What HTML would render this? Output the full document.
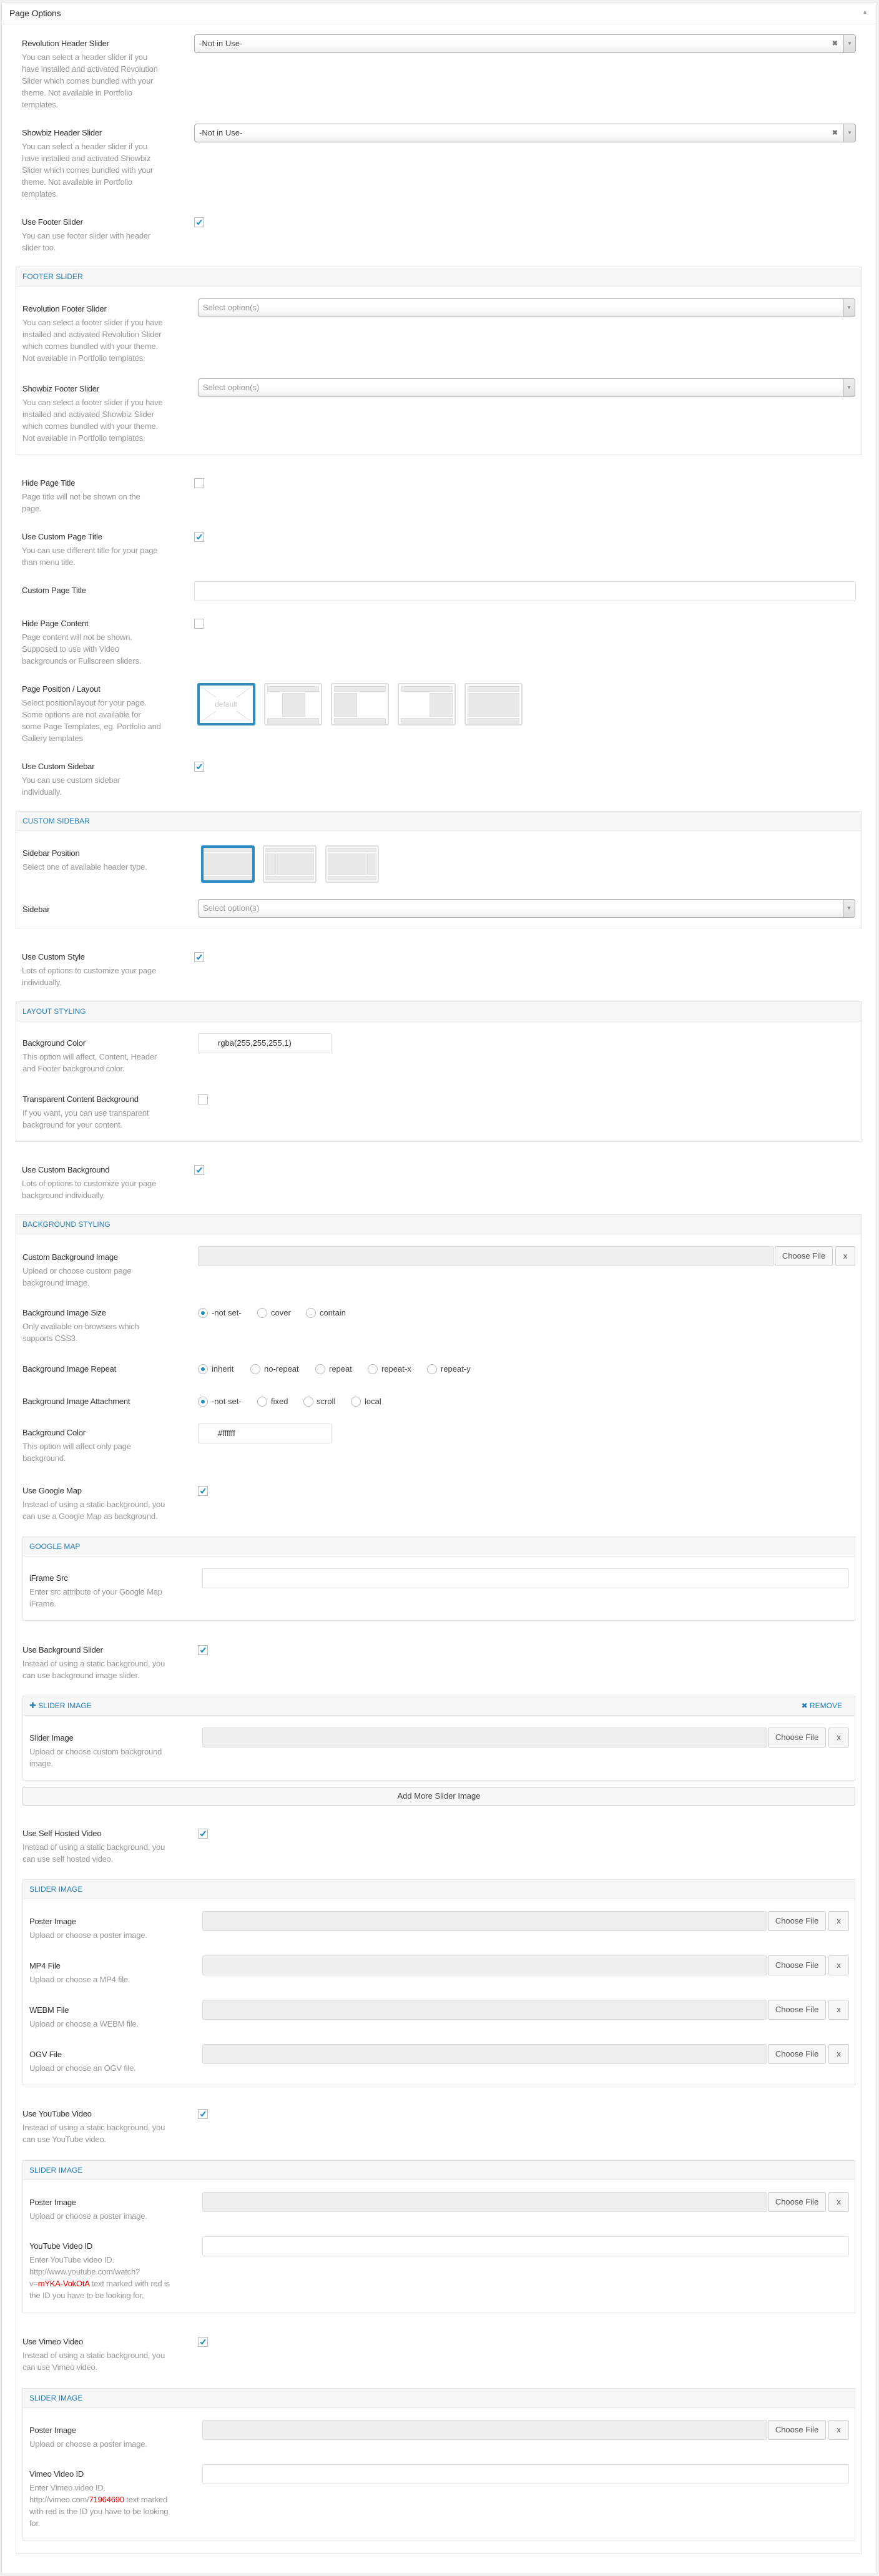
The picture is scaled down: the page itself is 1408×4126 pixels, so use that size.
<!DOCTYPE html>
<html><head><meta charset="utf-8"><style>
*{box-sizing:border-box;margin:0;padding:0}
body{width:1408px;height:4126px;background:#f1f1f1;position:relative;font-family:"Liberation Sans",sans-serif;overflow:hidden}
.a{position:absolute}
.outer{position:absolute;left:2px;top:3px;width:1403px;height:4120px;background:#fff;border:1px solid #e5e5e5}
.lb{position:absolute;font-size:13px;line-height:18px;color:#333;white-space:nowrap;letter-spacing:-0.2px}
.lb .d{display:block;color:#999;line-height:19px;margin-top:3px}
.box{position:absolute;border:1px solid #e5e5e5;background:#fff}
.box .h{height:31px;background:#f7f7f7;border-bottom:1px solid #e5e5e5;color:#2780b5;font-size:12px;line-height:30px;padding-left:10px;text-transform:uppercase}
.sel{position:absolute;height:30px;border:1px solid #aaa;border-radius:4px;background:linear-gradient(#fff 50%,#eee);font-size:13px;line-height:28px;color:#444;padding-left:7px}
.sel .ar{position:absolute;right:0;top:0;width:19px;height:28px;border-left:1px solid #aaa;background:linear-gradient(#eee,#ddd);border-radius:0 4px 4px 0;color:#888;font-size:8px;text-align:center;line-height:28px}
.sel .x{position:absolute;right:28px;top:0;color:#777;font-size:11px;font-weight:bold}
.sel.ph{color:#999}
.cb{position:absolute;width:16px;height:16px;border:1px solid #b4b9be;background:#fff}
.cb svg{position:absolute;left:1px;top:1px}
.inp{position:absolute;border:1px solid #ddd;border-radius:3px;background:#fff;height:32px;font-size:13px;line-height:30px;color:#333}
.fi{position:absolute;height:32px;background:#eee;border:1px solid #ddd;border-radius:3px}
.btn{position:absolute;height:32px;background:#f7f7f7;border:1px solid #ccc;border-radius:3px;font-size:13px;line-height:30px;text-align:center;color:#555}
.rd{position:absolute;width:16px;height:16px;border:1px solid #b4b9be;border-radius:50%;background:#fff}
.rd.on::after{content:"";position:absolute;left:4px;top:4px;width:6px;height:6px;border-radius:50%;background:#1e8cbe}
.rt{position:absolute;font-size:13px;line-height:18px;color:#444}
.img{position:absolute;border:2px solid #ddd;border-radius:3px;background:#fff}
.img.on{border:4px solid #2e8bbf}
.g{position:absolute;background:#e9e9e9;border:1px solid #ddd}
</style></head><body>
<div class="outer"></div>
<div class="a" style="left:3px;top:38px;width:1401px;height:1px;background:#eee"></div>
<div class="lb" style="left:15px;top:12px;font-size:14px;color:#222">Page Options</div>
<div class="a" style="left:1381px;top:14px;font-size:9px;color:#999">▲</div>

<!-- boxes -->
<div class="box" style="left:25px;top:427px;width:1356px;height:302px"><div class="h">Footer Slider</div></div>
<div class="box" style="left:25px;top:1299px;width:1356px;height:188px"><div class="h">Custom Sidebar</div></div>
<div class="box" style="left:25px;top:1604px;width:1356px;height:225px"><div class="h">Layout Styling</div></div>
<div class="box" style="left:25px;top:1945px;width:1356px;height:2146px"><div class="h">Background Styling</div></div>
<div class="box" style="left:36px;top:2461px;width:1334px;height:135px"><div class="h">Google Map</div></div>
<div class="box" style="left:36px;top:2716px;width:1334px;height:136px"><div class="h"><span style="font-size:13px">✚</span> Slider Image<span style="position:absolute;right:20px">✖ REMOVE</span></div></div>
<div class="btn" style="left:36px;top:2862px;width:1334px;height:30px;line-height:28px;color:#444">Add More Slider Image</div>
<div class="box" style="left:36px;top:3010px;width:1334px;height:330px"><div class="h">Slider Image</div></div>
<div class="box" style="left:36px;top:3460px;width:1334px;height:245px"><div class="h">Slider Image</div></div>
<div class="box" style="left:36px;top:3825px;width:1334px;height:244px"><div class="h">Slider Image</div></div>

<!-- labels -->
<div class="lb" style="left:35px;top:61px">Revolution Header Slider<span class="d">You can select a header slider if you<br>have installed and activated Revolution<br>Slider which comes bundled with your<br>theme. Not available in Portfolio<br>templates.</span></div>
<div class="lb" style="left:35px;top:204px">Showbiz Header Slider<span class="d">You can select a header slider if you<br>have installed and activated Showbiz<br>Slider which comes bundled with your<br>theme. Not available in Portfolio<br>templates.</span></div>
<div class="lb" style="left:35px;top:347px">Use Footer Slider<span class="d">You can use footer slider with header<br>slider too.</span></div>
<div class="lb" style="left:36px;top:486px">Revolution Footer Slider<span class="d">You can select a footer slider if you have<br>installed and activated Revolution Slider<br>which comes bundled with your theme.<br>Not available in Portfolio templates.</span></div>
<div class="lb" style="left:36px;top:614px">Showbiz Footer Slider<span class="d">You can select a footer slider if you have<br>installed and activated Showbiz Slider<br>which comes bundled with your theme.<br>Not available in Portfolio templates.</span></div>
<div class="lb" style="left:35px;top:765px">Hide Page Title<span class="d">Page title will not be shown on the<br>page.</span></div>
<div class="lb" style="left:35px;top:851px">Use Custom Page Title<span class="d">You can use different title for your page<br>than menu title.</span></div>
<div class="lb" style="left:35px;top:937px">Custom Page Title</div>
<div class="lb" style="left:35px;top:990px">Hide Page Content<span class="d">Page content will not be shown.<br>Supposed to use with Video<br>backgrounds or Fullscreen sliders.</span></div>
<div class="lb" style="left:35px;top:1095px">Page Position / Layout<span class="d">Select position/layout for your page.<br>Some options are not available for<br>some Page Templates, eg. Portfolio and<br>Gallery templates</span></div>
<div class="lb" style="left:35px;top:1219px">Use Custom Sidebar<span class="d">You can use custom sidebar<br>individually.</span></div>
<div class="lb" style="left:36px;top:1358px">Sidebar Position<span class="d">Select one of available header type.</span></div>
<div class="lb" style="left:36px;top:1448px">Sidebar</div>
<div class="lb" style="left:35px;top:1524px">Use Custom Style<span class="d">Lots of options to customize your page<br>individually.</span></div>
<div class="lb" style="left:36px;top:1662px">Background Color<span class="d">This option will affect, Content, Header<br>and Footer background color.</span></div>
<div class="lb" style="left:36px;top:1752px">Transparent Content Background<span class="d">If you want, you can use transparent<br>background for your content.</span></div>
<div class="lb" style="left:35px;top:1865px">Use Custom Background<span class="d">Lots of options to customize your page<br>background individually.</span></div>
<div class="lb" style="left:36px;top:2005px">Custom Background Image<span class="d">Upload or choose custom page<br>background image.</span></div>
<div class="lb" style="left:36px;top:2094px">Background Image Size<span class="d">Only available on browsers which<br>supports CSS3.</span></div>
<div class="lb" style="left:36px;top:2184px">Background Image Repeat</div>
<div class="lb" style="left:36px;top:2236px">Background Image Attachment</div>
<div class="lb" style="left:36px;top:2286px">Background Color<span class="d">This option will affect only page<br>background.</span></div>
<div class="lb" style="left:36px;top:2379px">Use Google Map<span class="d">Instead of using a static background, you<br>can use a Google Map as background.</span></div>
<div class="lb" style="left:47px;top:2519px">iFrame Src<span class="d">Enter src attribute of your Google Map<br>iFrame.</span></div>
<div class="lb" style="left:36px;top:2634px">Use Background Slider<span class="d">Instead of using a static background, you<br>can use background image slider.</span></div>
<div class="lb" style="left:47px;top:2775px">Slider Image<span class="d">Upload or choose custom background<br>image.</span></div>
<div class="lb" style="left:36px;top:2928px">Use Self Hosted Video<span class="d">Instead of using a static background, you<br>can use self hosted video.</span></div>
<div class="lb" style="left:47px;top:3069px">Poster Image<span class="d">Upload or choose a poster image.</span></div>
<div class="lb" style="left:47px;top:3140px">MP4 File<span class="d">Upload or choose a MP4 file.</span></div>
<div class="lb" style="left:47px;top:3211px">WEBM File<span class="d">Upload or choose a WEBM file.</span></div>
<div class="lb" style="left:47px;top:3282px">OGV File<span class="d">Upload or choose an OGV file.</span></div>
<div class="lb" style="left:36px;top:3377px">Use YouTube Video<span class="d">Instead of using a static background, you<br>can use YouTube video.</span></div>
<div class="lb" style="left:47px;top:3519px">Poster Image<span class="d">Upload or choose a poster image.</span></div>
<div class="lb" style="left:47px;top:3589px">YouTube Video ID<span class="d">Enter YouTube video ID.<br>http://www.youtube.com/watch?<br>v=<span style="color:#e00">mYKA-VokOtA</span> text marked with red is<br>the ID you have to be looking for.</span></div>
<div class="lb" style="left:36px;top:3742px">Use Vimeo Video<span class="d">Instead of using a static background, you<br>can use Vimeo video.</span></div>
<div class="lb" style="left:47px;top:3884px">Poster Image<span class="d">Upload or choose a poster image.</span></div>
<div class="lb" style="left:47px;top:3954px">Vimeo Video ID<span class="d">Enter Vimeo video ID.<br>http://vimeo.com/<span style="color:#e00">71964690</span> text marked<br>with red is the ID you have to be looking<br>for.</span></div>

<!-- selects -->
<div class="sel" style="left:311px;top:55px;width:1060px">-Not in Use-<span class="x">✖</span><span class="ar">▼</span></div>
<div class="sel" style="left:311px;top:198px;width:1060px">-Not in Use-<span class="x">✖</span><span class="ar">▼</span></div>
<div class="sel ph" style="left:317px;top:478px;width:1053px">Select option(s)<span class="ar">▼</span></div>
<div class="sel ph" style="left:317px;top:606px;width:1053px">Select option(s)<span class="ar">▼</span></div>
<div class="sel ph" style="left:317px;top:1440px;width:1053px">Select option(s)<span class="ar">▼</span></div>

<!-- checkboxes -->
<svg width="0" height="0" style="position:absolute"><defs><symbol id="ck" viewBox="0 0 14 14"><path d="M2.5 7.5 L5.5 10.5 L11.5 2.5" fill="none" stroke="#1e8cbe" stroke-width="2.4"/></symbol></defs></svg>
<div class="cb" style="left:311px;top:348px"><svg width="12" height="12"><use href="#ck"/></svg></div>
<div class="cb" style="left:311px;top:766px"></div>
<div class="cb" style="left:311px;top:852px"><svg width="12" height="12"><use href="#ck"/></svg></div>
<div class="cb" style="left:311px;top:991px"></div>
<div class="cb" style="left:311px;top:1220px"><svg width="12" height="12"><use href="#ck"/></svg></div>
<div class="cb" style="left:311px;top:1525px"><svg width="12" height="12"><use href="#ck"/></svg></div>
<div class="cb" style="left:317px;top:1753px"></div>
<div class="cb" style="left:311px;top:1866px"><svg width="12" height="12"><use href="#ck"/></svg></div>
<div class="cb" style="left:317px;top:2380px"><svg width="12" height="12"><use href="#ck"/></svg></div>
<div class="cb" style="left:317px;top:2635px"><svg width="12" height="12"><use href="#ck"/></svg></div>
<div class="cb" style="left:317px;top:2929px"><svg width="12" height="12"><use href="#ck"/></svg></div>
<div class="cb" style="left:317px;top:3378px"><svg width="12" height="12"><use href="#ck"/></svg></div>
<div class="cb" style="left:317px;top:3743px"><svg width="12" height="12"><use href="#ck"/></svg></div>

<!-- text inputs -->
<div class="inp" style="left:311px;top:931px;width:1060px"></div>
<div class="inp" style="left:317px;top:1655px;width:214px;padding-left:31px">rgba(255,255,255,1)</div>
<div class="inp" style="left:317px;top:2280px;width:214px;padding-left:31px">#ffffff</div>
<div class="inp" style="left:324px;top:2512px;width:1036px"></div>
<div class="inp" style="left:324px;top:3582px;width:1036px"></div>
<div class="inp" style="left:324px;top:3947px;width:1036px"></div>

<!-- file inputs -->
<div class="fi" style="left:317px;top:1996px;width:923px"></div><div class="btn" style="left:1241px;top:1996px;width:93px">Choose File</div><div class="btn" style="left:1338px;top:1996px;width:32px">x</div>
<div class="fi" style="left:324px;top:2767px;width:905px"></div><div class="btn" style="left:1230px;top:2767px;width:93px">Choose File</div><div class="btn" style="left:1327px;top:2767px;width:33px">x</div>
<div class="fi" style="left:324px;top:3061px;width:905px"></div><div class="btn" style="left:1230px;top:3061px;width:93px">Choose File</div><div class="btn" style="left:1327px;top:3061px;width:33px">x</div>
<div class="fi" style="left:324px;top:3132px;width:905px"></div><div class="btn" style="left:1230px;top:3132px;width:93px">Choose File</div><div class="btn" style="left:1327px;top:3132px;width:33px">x</div>
<div class="fi" style="left:324px;top:3203px;width:905px"></div><div class="btn" style="left:1230px;top:3203px;width:93px">Choose File</div><div class="btn" style="left:1327px;top:3203px;width:33px">x</div>
<div class="fi" style="left:324px;top:3274px;width:905px"></div><div class="btn" style="left:1230px;top:3274px;width:93px">Choose File</div><div class="btn" style="left:1327px;top:3274px;width:33px">x</div>
<div class="fi" style="left:324px;top:3511px;width:905px"></div><div class="btn" style="left:1230px;top:3511px;width:93px">Choose File</div><div class="btn" style="left:1327px;top:3511px;width:33px">x</div>
<div class="fi" style="left:324px;top:3876px;width:905px"></div><div class="btn" style="left:1230px;top:3876px;width:93px">Choose File</div><div class="btn" style="left:1327px;top:3876px;width:33px">x</div>

<!-- radios -->
<div class="rd on" style="left:317px;top:2095px"></div><div class="rt" style="left:339px;top:2094px">-not set-</div>
<div class="rd" style="left:412px;top:2095px"></div><div class="rt" style="left:434px;top:2094px">cover</div>
<div class="rd" style="left:490px;top:2095px"></div><div class="rt" style="left:512px;top:2094px">contain</div>
<div class="rd on" style="left:317px;top:2185px"></div><div class="rt" style="left:339px;top:2184px">inherit</div>
<div class="rd" style="left:401px;top:2185px"></div><div class="rt" style="left:423px;top:2184px">no-repeat</div>
<div class="rd" style="left:505px;top:2185px"></div><div class="rt" style="left:527px;top:2184px">repeat</div>
<div class="rd" style="left:589px;top:2185px"></div><div class="rt" style="left:611px;top:2184px">repeat-x</div>
<div class="rd" style="left:684px;top:2185px"></div><div class="rt" style="left:706px;top:2184px">repeat-y</div>
<div class="rd on" style="left:317px;top:2237px"></div><div class="rt" style="left:339px;top:2236px">-not set-</div>
<div class="rd" style="left:412px;top:2237px"></div><div class="rt" style="left:434px;top:2236px">fixed</div>
<div class="rd" style="left:486px;top:2237px"></div><div class="rt" style="left:507px;top:2236px">scroll</div>
<div class="rd" style="left:562px;top:2237px"></div><div class="rt" style="left:584px;top:2236px">local</div>

<!-- layout images -->
<div class="img on" style="left:316px;top:1094px;width:93px;height:68px">
<svg class="a" style="left:0;top:0" width="85" height="60"><path d="M2 2 L26 19 M83 2 L59 19 M2 58 L26 41 M83 58 L59 41" stroke="#ddd" stroke-width="1"/><text x="42" y="34" text-anchor="middle" font-family="Liberation Sans" font-size="12" fill="#ccc">default</text></svg></div>
<div class="img" style="left:423px;top:1094px;width:93px;height:68px"><div class="g" style="left:3px;top:3px;width:83px;height:9px"></div><div class="g" style="left:27px;top:14px;width:37px;height:38px"></div><div class="g" style="left:3px;top:54px;width:83px;height:9px"></div></div>
<div class="img" style="left:530px;top:1094px;width:93px;height:68px"><div class="g" style="left:3px;top:3px;width:83px;height:9px"></div><div class="g" style="left:3px;top:14px;width:37px;height:38px"></div><div class="g" style="left:3px;top:54px;width:83px;height:9px"></div></div>
<div class="img" style="left:637px;top:1094px;width:93px;height:68px"><div class="g" style="left:3px;top:3px;width:83px;height:9px"></div><div class="g" style="left:49px;top:14px;width:37px;height:38px"></div><div class="g" style="left:3px;top:54px;width:83px;height:9px"></div></div>
<div class="img" style="left:744px;top:1094px;width:93px;height:68px"><div class="g" style="left:3px;top:3px;width:83px;height:9px"></div><div class="g" style="left:3px;top:14px;width:83px;height:38px"></div><div class="g" style="left:3px;top:54px;width:83px;height:9px"></div></div>

<!-- sidebar images -->
<div class="img on" style="left:322px;top:1354px;width:86px;height:60px"><div class="g" style="left:0;top:0;width:78px;height:7px"></div><div class="g" style="left:0;top:9px;width:78px;height:34px"></div><div class="g" style="left:0;top:45px;width:78px;height:7px"></div></div>
<div class="img" style="left:421px;top:1354px;width:86px;height:60px"><div class="g" style="left:2px;top:2px;width:78px;height:7px"></div><div class="g" style="left:2px;top:11px;width:15px;height:34px"></div><div class="g" style="left:18px;top:11px;width:62px;height:34px"></div><div class="g" style="left:2px;top:47px;width:78px;height:7px"></div></div>
<div class="img" style="left:521px;top:1354px;width:86px;height:60px"><div class="g" style="left:2px;top:2px;width:78px;height:7px"></div><div class="g" style="left:2px;top:11px;width:62px;height:34px"></div><div class="g" style="left:65px;top:11px;width:15px;height:34px"></div><div class="g" style="left:2px;top:47px;width:78px;height:7px"></div></div>
</body></html>
